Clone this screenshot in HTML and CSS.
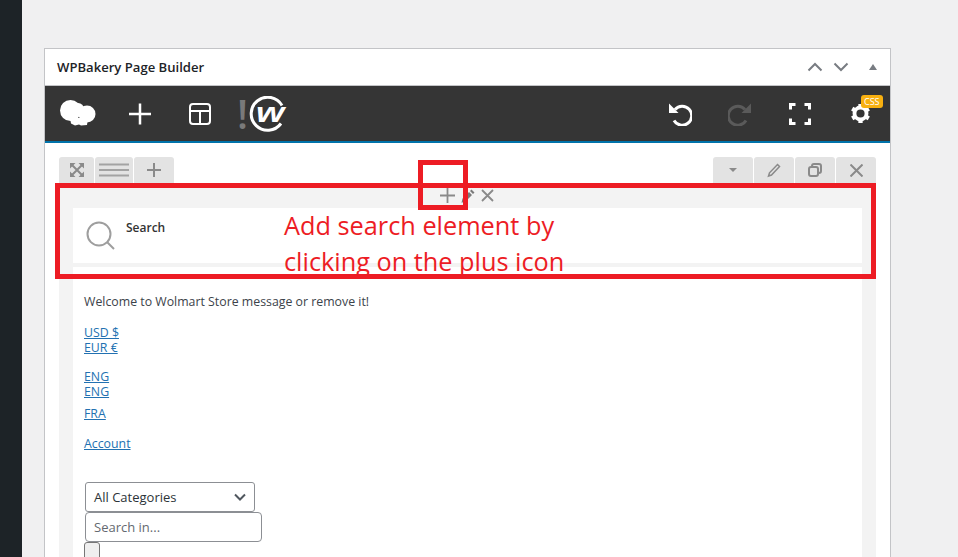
FILE: index.html
```html
<!DOCTYPE html>
<html lang="en">
<head>
<meta charset="UTF-8">
<meta name="viewport" content="width=device-width, initial-scale=1.0">
<title>WPBakery Page Builder</title>
<link rel="stylesheet" href="styles.css">
</head>
<body>

<div class="sidebar"></div>

<div class="main">
    <div class="panel">
        <div class="panel-head">
            <h2>WPBakery Page Builder</h2>
            <div class="panel-arrows">
                <svg class="arrow-move" width="16" height="10" viewBox="0 0 16 10"><path d="M1.5 8.5 8 2l6.5 6.5"/></svg>
                <svg class="arrow-move" width="16" height="10" viewBox="0 0 16 10"><path d="M1.5 1.5 8 8l6.5-6.5"/></svg>
                <span class="arrow-toggle"></span>
            </div>
        </div>

        <div class="toolbar">
            <div class="toolbar-left">
                <svg class="logo-hat" width="38" height="28" viewBox="0 0 38 28">
                    <circle cx="11.500" cy="10.500" r="10.500"/>
                    <circle cx="28" cy="14" r="8.500"/>
                    <circle cx="19" cy="9" r="6"/>
                    <path d="M11 18h18l-1 7-6 .5-2-1-4 1-4-2z"/>
                </svg>
                <svg class="tool-icon plus-icon" width="24" height="24" viewBox="0 0 24 24"><path d="M12 1.500v21M1 12h22"/></svg>
                <svg class="tool-icon layout-icon" width="22" height="22" viewBox="0 0 22 22">
                    <rect x="1" y="1" width="20" height="20" rx="3"/>
                    <path d="M1 8h20M11 8v13"/>
                </svg>
                <span class="notice">!</span>
                <svg class="wolmart-logo" width="38" height="36" viewBox="0 0 38 36">
                    <path d="M33 9.500A16.500 16.500 0 1 0 32 27.500"/>
                    <text class="wolmart-w" transform="translate(7 26) scale(1.300 1)">w</text>
                </svg>
            </div>
            <div class="toolbar-right">
                <svg class="tool-icon" width="24" height="24" viewBox="0 0 24 24"><path d="M7 7.500a9.500 9.500 0 1 1-1 11"/><path class="fill-white" d="M1 1.500v9.500h9.500z"/></svg>
                <svg class="tool-icon tool-off" width="24" height="24" viewBox="0 0 24 24"><path d="M17 7.500a9.500 9.500 0 1 0 1 11"/><path class="fill-grey" d="M23 1.500v9.500h-9.500z"/></svg>
                <svg class="tool-icon" width="24" height="24" viewBox="0 0 24 24"><path d="M2.500 7.500v-5h5M16.500 2.500h5v5M21.500 16.500v5h-5M7.500 21.500h-5v-5"/></svg>
                <div class="gear-box">
                    <svg class="gear" width="21" height="21" viewBox="0 0 22 22">
                        <circle cx="11" cy="11" r="6.300"/>
                        <path d="M11 1v4M11 17v4M2.300 6l3.500 2M16.200 14l3.500 2M2.300 16l3.500-2M16.200 8l3.500-2"/>
                    </svg>
                    <span class="css-badge">CSS</span>
                </div>
            </div>
        </div>

        <div class="canvas">
            <div class="row-controls">
                <div class="control-group">
                    <span class="control">
                        <svg width="14" height="14" viewBox="0 0 14 14">
                            <path class="fill-grey2" d="M0 0h5.500L0 5.500zM14 0v5.500L8.500 0zM0 14V8.500L5.500 14zM14 14H8.500L14 8.500z"/>
                            <path d="M2 2l10 10M12 2L2 12"/>
                        </svg>
                    </span>
                    <span class="control control-wide"><svg width="30" height="14" viewBox="0 0 30 14"><path d="M0 1.500h30M0 7h30M0 12.500h30"/></svg></span>
                    <span class="control control-add"><svg width="14" height="14" viewBox="0 0 14 14"><path d="M7 0v14M0 7h14"/></svg></span>
                </div>
                <div class="control-group">
                    <span class="control"><span class="caret"></span></span>
                    <span class="control"><svg width="14" height="15" viewBox="0 0 14 15"><path class="pen" d="M10.500 1.500l2 2L4.500 12 1.500 13l1-3.200z"/></svg></span>
                    <span class="control"><svg width="14" height="14" viewBox="0 0 14 14"><rect x="1" y="4" width="9" height="9" rx="2"/><path d="M4 3.500V3a2 2 0 0 1 2-2h5a2 2 0 0 1 2 2v5a2 2 0 0 1-2 2h-.500"/></svg></span>
                    <span class="control"><svg width="13" height="13" viewBox="0 0 13 13"><path d="M.5.5l12 12M12.500.5l-12 12"/></svg></span>
                </div>
            </div>

            <div class="row-body">
                <div class="column-controls">
                    <svg width="15" height="15" viewBox="0 0 15 15"><path d="M7.500 0v15M0 7.500h15"/></svg>
                    <svg width="14" height="14" viewBox="0 0 14 14"><path class="fill-grey2" d="M10.500.5l3 3L12 5 9 2zM8 3l3 3-6.500 6.500-4 1.200 1-4.200z"/></svg>
                    <svg width="13" height="13" viewBox="0 0 13 13"><path d="M1 1l11 11M12 1L1 12"/></svg>
                </div>

                <div class="search-card">
                    <svg class="search-icon" width="30" height="30" viewBox="0 0 30 30">
                        <circle cx="13" cy="13" r="11.500"/>
                        <path d="M21 21l7 7"/>
                    </svg>
                    <span class="search-title">Search</span>
                </div>

                <div class="text-card">
                    <p class="welcome">Welcome to Wolmart Store message or remove it!</p>
                    <ul class="link-list list-currency">
                        <li><a href="#">USD $</a></li>
                        <li><a href="#">EUR €</a></li>
                    </ul>
                    <ul class="link-list list-lang">
                        <li><a href="#">ENG</a></li>
                        <li><a href="#">ENG</a></li>
                    </ul>
                    <ul class="link-list list-fra">
                        <li><a href="#">FRA</a></li>
                    </ul>
                    <ul class="link-list list-account">
                        <li><a href="#">Account</a></li>
                    </ul>
                    <form class="search-form">
                        <div class="select-box">All Categories
                            <svg width="12" height="8" viewBox="0 0 12 8"><path d="M1 1.500l5 5 5-5"/></svg>
                        </div>
                        <input class="search-input" type="text" placeholder="Search in...">
                        <button class="search-btn" type="button"></button>
                    </form>
                </div>
            </div>
        </div>
    </div>
</div>

<!-- red markup drawn on top of the screenshot -->
<div class="mark mark-row"></div>
<div class="mark mark-plus"></div>
<div class="mark-text">Add search element by<br>clicking on the plus icon</div>

</body>
</html>
```
FILE: styles.css
```css
html, body {
    height: 557px;
    overflow: hidden;
}
body {
    margin: 0;
    display: flex;
    font-family: "Open Sans", sans-serif;
    background-color: #f0f0f1;
    color: #3c434a;
}
svg {
    display: block;
    fill: none;
}
.sidebar {
    width: 22px;
    flex-shrink: 0;
    background-color: #1d2327;
}
.main {
    flex: 1;
    box-sizing: border-box;
    height: 557px;
    overflow: hidden;
    padding: 48px 67px 0 22px;
}
.panel {
    border: 1px solid #c3c4c7;
    background-color: #fff;
    height: 520px;
}
.panel-head {
    height: 36px;
    display: flex;
    align-items: center;
    justify-content: space-between;
    padding: 0 13px 0 12px;
    border-bottom: 1px solid #c3c4c7;
}
.panel-head h2 {
    margin: 0;
    font-size: 13.100px;
    font-weight: 600;
    color: #1d2327;
}
.panel-arrows {
    display: flex;
    align-items: center;
}
.arrow-move {
    margin-right: 10px;
}
.arrow-move path {
    stroke: #787c82;
    stroke-width: 2;
}
.arrow-toggle {
    margin-left: 10px;
    width: 0;
    height: 0;
    border-left: 4px solid transparent;
    border-right: 4px solid transparent;
    border-bottom: 6px solid #787c82;
}
.toolbar {
    height: 55px;
    background-color: #353535;
    border-bottom: 2px solid #0073aa;
    display: flex;
    align-items: center;
    justify-content: space-between;
    padding: 0 18px 0 14px;
}
.toolbar-left, .toolbar-right {
    display: flex;
    align-items: center;
}
.logo-hat {
    margin-right: 31px;
}
.logo-hat circle, .logo-hat path {
    fill: #fff;
}
.tool-icon path, .tool-icon rect {
    stroke: #fff;
    stroke-width: 3;
}
.layout-icon {
    margin-left: 37px;
}
.layout-icon rect, .layout-icon path {
    stroke-width: 2;
}
.plus-icon path {
    stroke-width: 2.500;
}
.tool-off path {
    stroke: #5a5a5a;
}
.tool-icon .fill-white {
    fill: #fff;
    stroke: none;
}
.tool-icon .fill-grey {
    fill: #5a5a5a;
    stroke: none;
}
.notice {
    margin-left: 26px;
    font-size: 40px;
    line-height: 40px;
    font-weight: 600;
    color: #7a7a7a;
}
.wolmart-logo {
    margin-left: 1px;
}
.wolmart-logo path {
    stroke: #fff;
    stroke-width: 3;
}
.wolmart-w {
    font-family: "Liberation Sans", sans-serif;
    font-size: 28px;
    font-weight: bold;
    font-style: italic;
    fill: #fff;
}
.toolbar-right .tool-icon {
    margin-right: 36px;
}
.toolbar-right .tool-icon:nth-child(3) {
    margin-right: 38px;
}
.gear-box {
    position: relative;
    width: 22px;
}
.gear circle {
    stroke: #fff;
    stroke-width: 4;
}
.gear path {
    stroke: #fff;
    stroke-width: 4.500;
}
.css-badge {
    position: absolute;
    top: -8px;
    left: 11px;
    padding: 0 3px;
    height: 13px;
    line-height: 13px;
    font-size: 9px;
    border-radius: 3px;
    color: #fff;
    background-color: #f8b010;
}
.canvas {
    padding: 14px 14px 0 14px;
}
.row-controls {
    height: 26px;
    display: flex;
    justify-content: space-between;
}
.control-group {
    display: flex;
    gap: 1px;
}
.control {
    width: 40px;
    height: 26px;
    background-color: #e3e3e3;
    border-radius: 3px 3px 0 0;
    display: flex;
    align-items: center;
    justify-content: center;
}
.control-group:first-child .control {
    width: 35px;
}
.control-group:first-child .control-wide {
    width: 38px;
}
.control-group:first-child .control-add {
    width: 40px;
}
.control path, .control rect {
    stroke: #8a8a8a;
    stroke-width: 2;
}
.control-wide svg path {
    stroke: #a3a3a3;
}
.control .fill-grey2 {
    fill: #8a8a8a;
    stroke: none;
}
.control .pen {
    stroke-width: 1.500;
}
.caret {
    width: 0;
    height: 0;
    border-left: 4px solid transparent;
    border-right: 4px solid transparent;
    border-top: 4px solid #8a8a8a;
}
.row-body {
    background-color: #f3f3f3;
    padding: 0 14px;
    height: 400px;
}
.column-controls {
    height: 25px;
    display: flex;
    align-items: center;
    justify-content: center;
    gap: 6px;
    padding-right: 1px;
}
.column-controls path {
    stroke: #8a8a8a;
    stroke-width: 1.800;
}
.column-controls .fill-grey2 {
    fill: #7a7a7a;
    stroke: none;
}
.search-card {
    height: 55px;
    background-color: #fff;
    display: flex;
    padding-left: 13px;
    box-sizing: border-box;
    margin-bottom: 4px;
}
.search-icon {
    margin-top: 13px;
}
.search-icon circle, .search-icon path {
    stroke: #9e9e9e;
    stroke-width: 2;
}
.search-title {
    margin: 11px 0 0 10px;
    font-size: 12px;
    font-weight: 600;
    line-height: 17px;
    color: #333;
}
.text-card {
    background-color: #fff;
    padding: 26px 11px 0;
    height: 320px;
    font-size: 12.340px;
    line-height: 15px;
}
.welcome {
    margin: 0 0 15px;
    line-height: 17px;
    color: #3c434a;
}
.link-list {
    list-style: none;
    margin: 0;
    padding: 0;
}
.link-list li {
    height: 15px;
}
.link-list a {
    display: inline-block;
    line-height: 15px;
    color: #2271b1;
}
.list-currency {
    margin-bottom: 14px;
}
.list-lang {
    margin-bottom: 7px;
}
.list-fra {
    margin-bottom: 15px;
}
.list-account {
    margin-bottom: 31px;
}
.select-box {
    box-sizing: border-box;
    width: 170px;
    height: 30px;
    margin-left: 1px;
    padding: 0 8px;
    display: flex;
    align-items: center;
    justify-content: space-between;
    border: 1px solid #8c8f94;
    border-radius: 3px;
    font-size: 13px;
    color: #2c3338;
}
.select-box path {
    stroke: #50575e;
    stroke-width: 2;
}
.search-input {
    display: block;
    box-sizing: border-box;
    width: 177px;
    height: 30px;
    margin-left: 1px;
    padding: 0 8px;
    border: 1px solid #8c8f94;
    border-radius: 4px;
    font-family: "Open Sans", sans-serif;
    font-size: 13px;
}
.search-input::placeholder {
    color: #646970;
}
.search-btn {
    display: block;
    width: 16px;
    height: 30px;
    padding: 0;
    background-color: #efefef;
    border: 1px solid #767676;
    border-radius: 3px;
}
.mark {
    position: absolute;
    box-sizing: border-box;
    border: 5px solid #ed1c24;
}
.mark-row {
    left: 55px;
    top: 183px;
    width: 821px;
    height: 96px;
}
.mark-plus {
    left: 418px;
    top: 160px;
    width: 50px;
    height: 50px;
}
.mark-text {
    position: absolute;
    left: 284px;
    top: 207px;
    font-size: 25.300px;
    line-height: 36px;
    color: #ed1c24;
}
```
